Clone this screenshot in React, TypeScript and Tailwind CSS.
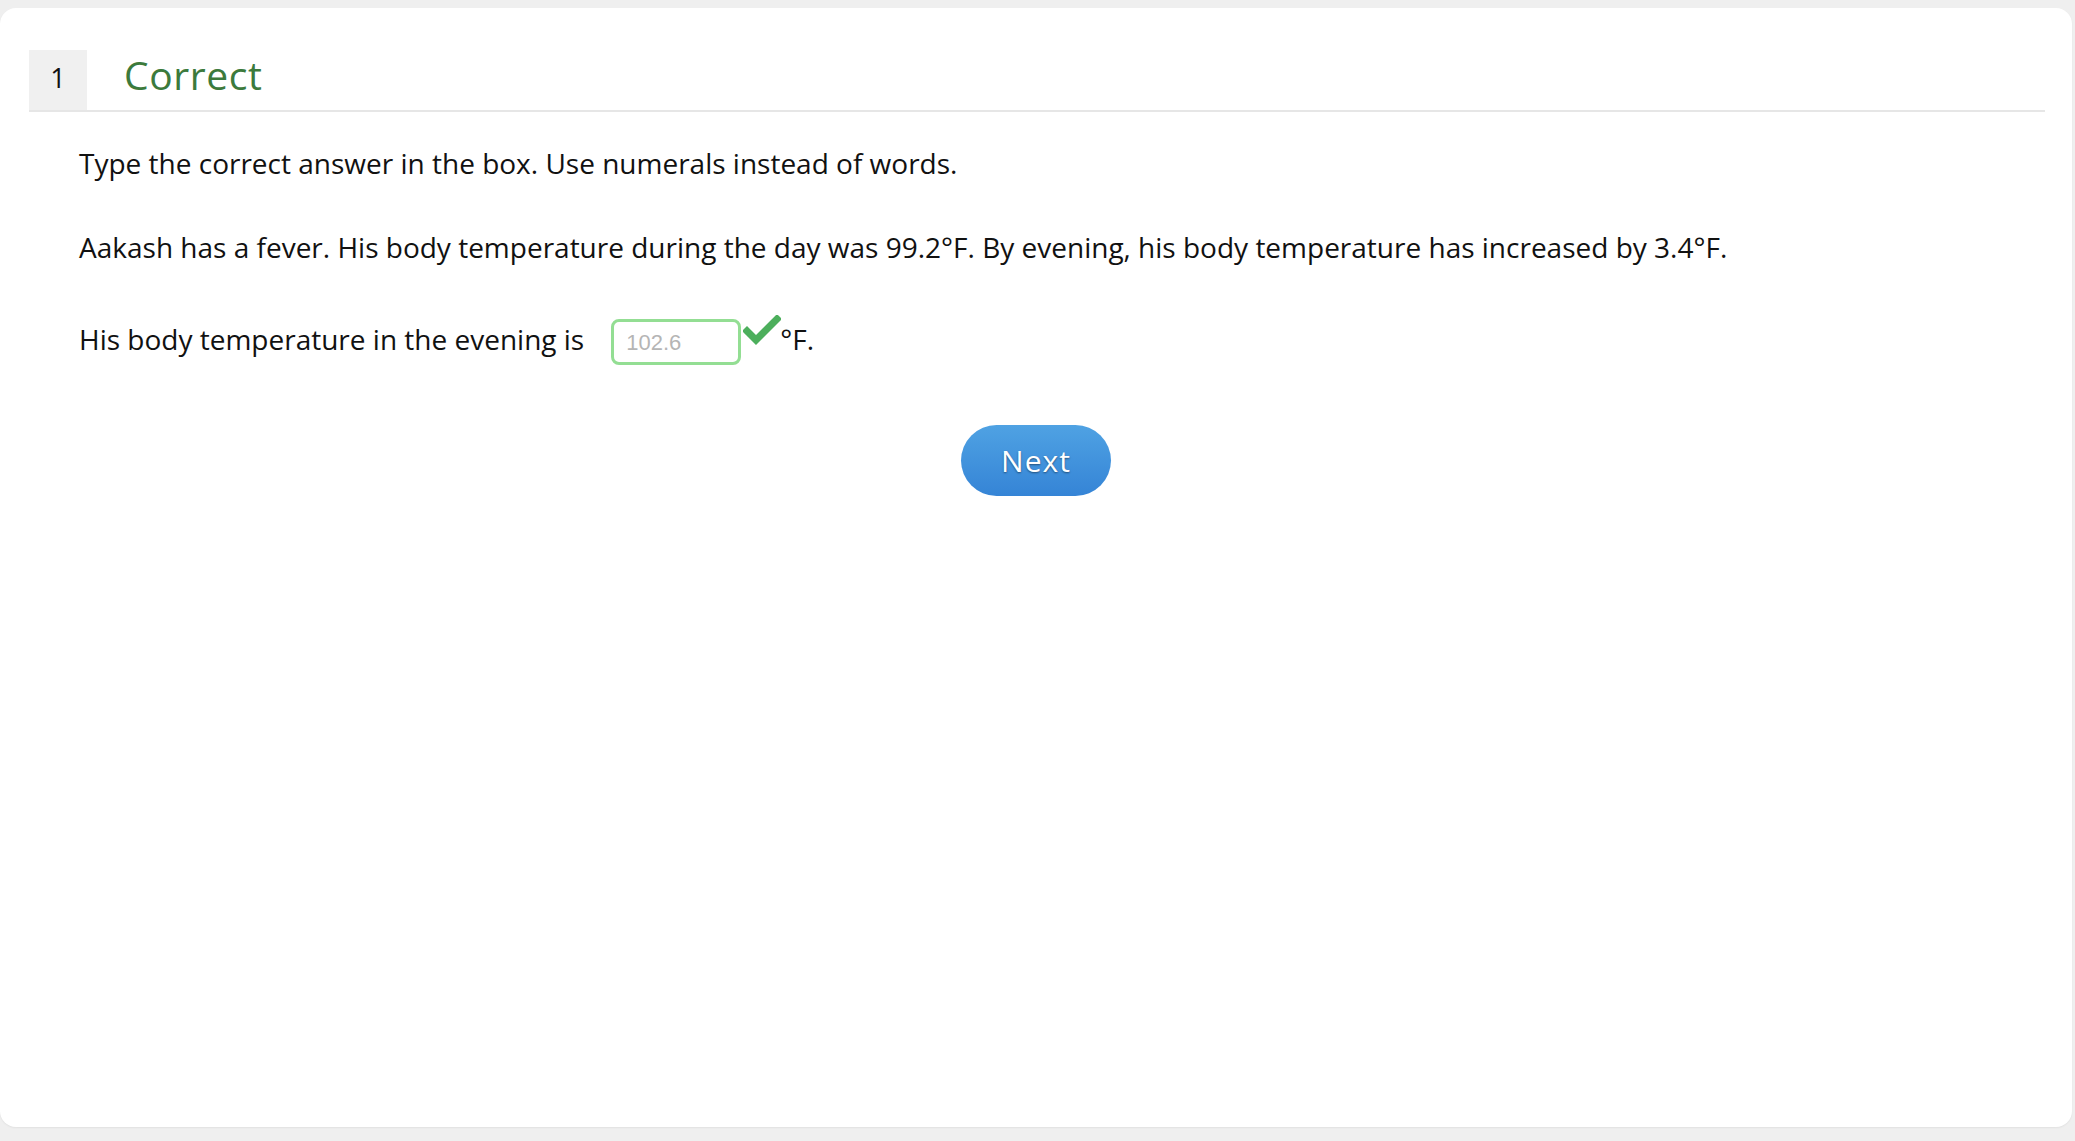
export default function App() {
  return (
    <div className="min-h-screen w-full bg-[#efefef] pt-[8px] pb-[14px] pr-[3px]" style={{ fontFamily: '"Open Sans", sans-serif' }}>
      <div className="h-[1119px] w-full rounded-[16px] bg-white shadow-[0_1px_2px_rgba(0,0,0,0.06)] pt-[42px]">
        <div className="mx-[29px] mr-[27px] flex items-stretch border-b-2 border-[#e6e6e6]">
          <div className="flex h-[60px] w-[58px] items-center justify-center bg-[#f0f0f0] pb-[4px] text-[27px] text-[#111]">1</div>
          <div className="flex items-start pl-[37px] pt-[1px] text-[39px] leading-[48px] tracking-[0.6px] text-[#3c7a3c]">Correct</div>
        </div>

        <div className="px-[79px] text-[28px] text-[#111]">
          <p className="mt-[31px] leading-[40px]">Type the correct answer in the box. Use numerals instead of words.</p>
          <p className="mt-[44px] leading-[40px]">
            Aakash has a fever. His body temperature during the day was 99.2°F. By evening, his body temperature has increased by 3.4°F.
          </p>
          <div className="mt-[46px] flex items-center">
            <span>His body temperature in the evening is</span>
            <div className="ml-[27px] mt-[6px] flex h-[46px] w-[130px] items-center rounded-[8px] border-[3px] border-[#93de93] px-[12px] text-[22px] text-[#b5b5b5]" style={{ fontFamily: '"Liberation Sans", Arial, sans-serif' }}>
              102.6
            </div>
            <svg width="38" height="30" viewBox="0 0 38 30" className="-mt-[18px] ml-[2px]">
              <path d="M4 16 L13 25 L34 4" fill="none" stroke="#4caf5c" strokeWidth="7" strokeLinecap="square" strokeLinejoin="miter" />
            </svg>
            <span className="-ml-[1px]">°F.</span>
          </div>
          <div className="mt-[60px] flex justify-center">
            <button className="h-[71px] w-[150px] rounded-full bg-gradient-to-b from-[#4fa2e3] to-[#3584d6] text-[30px] tracking-[1px] text-white [text-shadow:0_1px_2px_rgba(0,0,0,0.45)]">
              Next
            </button>
          </div>
        </div>
      </div>
    </div>
  );
}
